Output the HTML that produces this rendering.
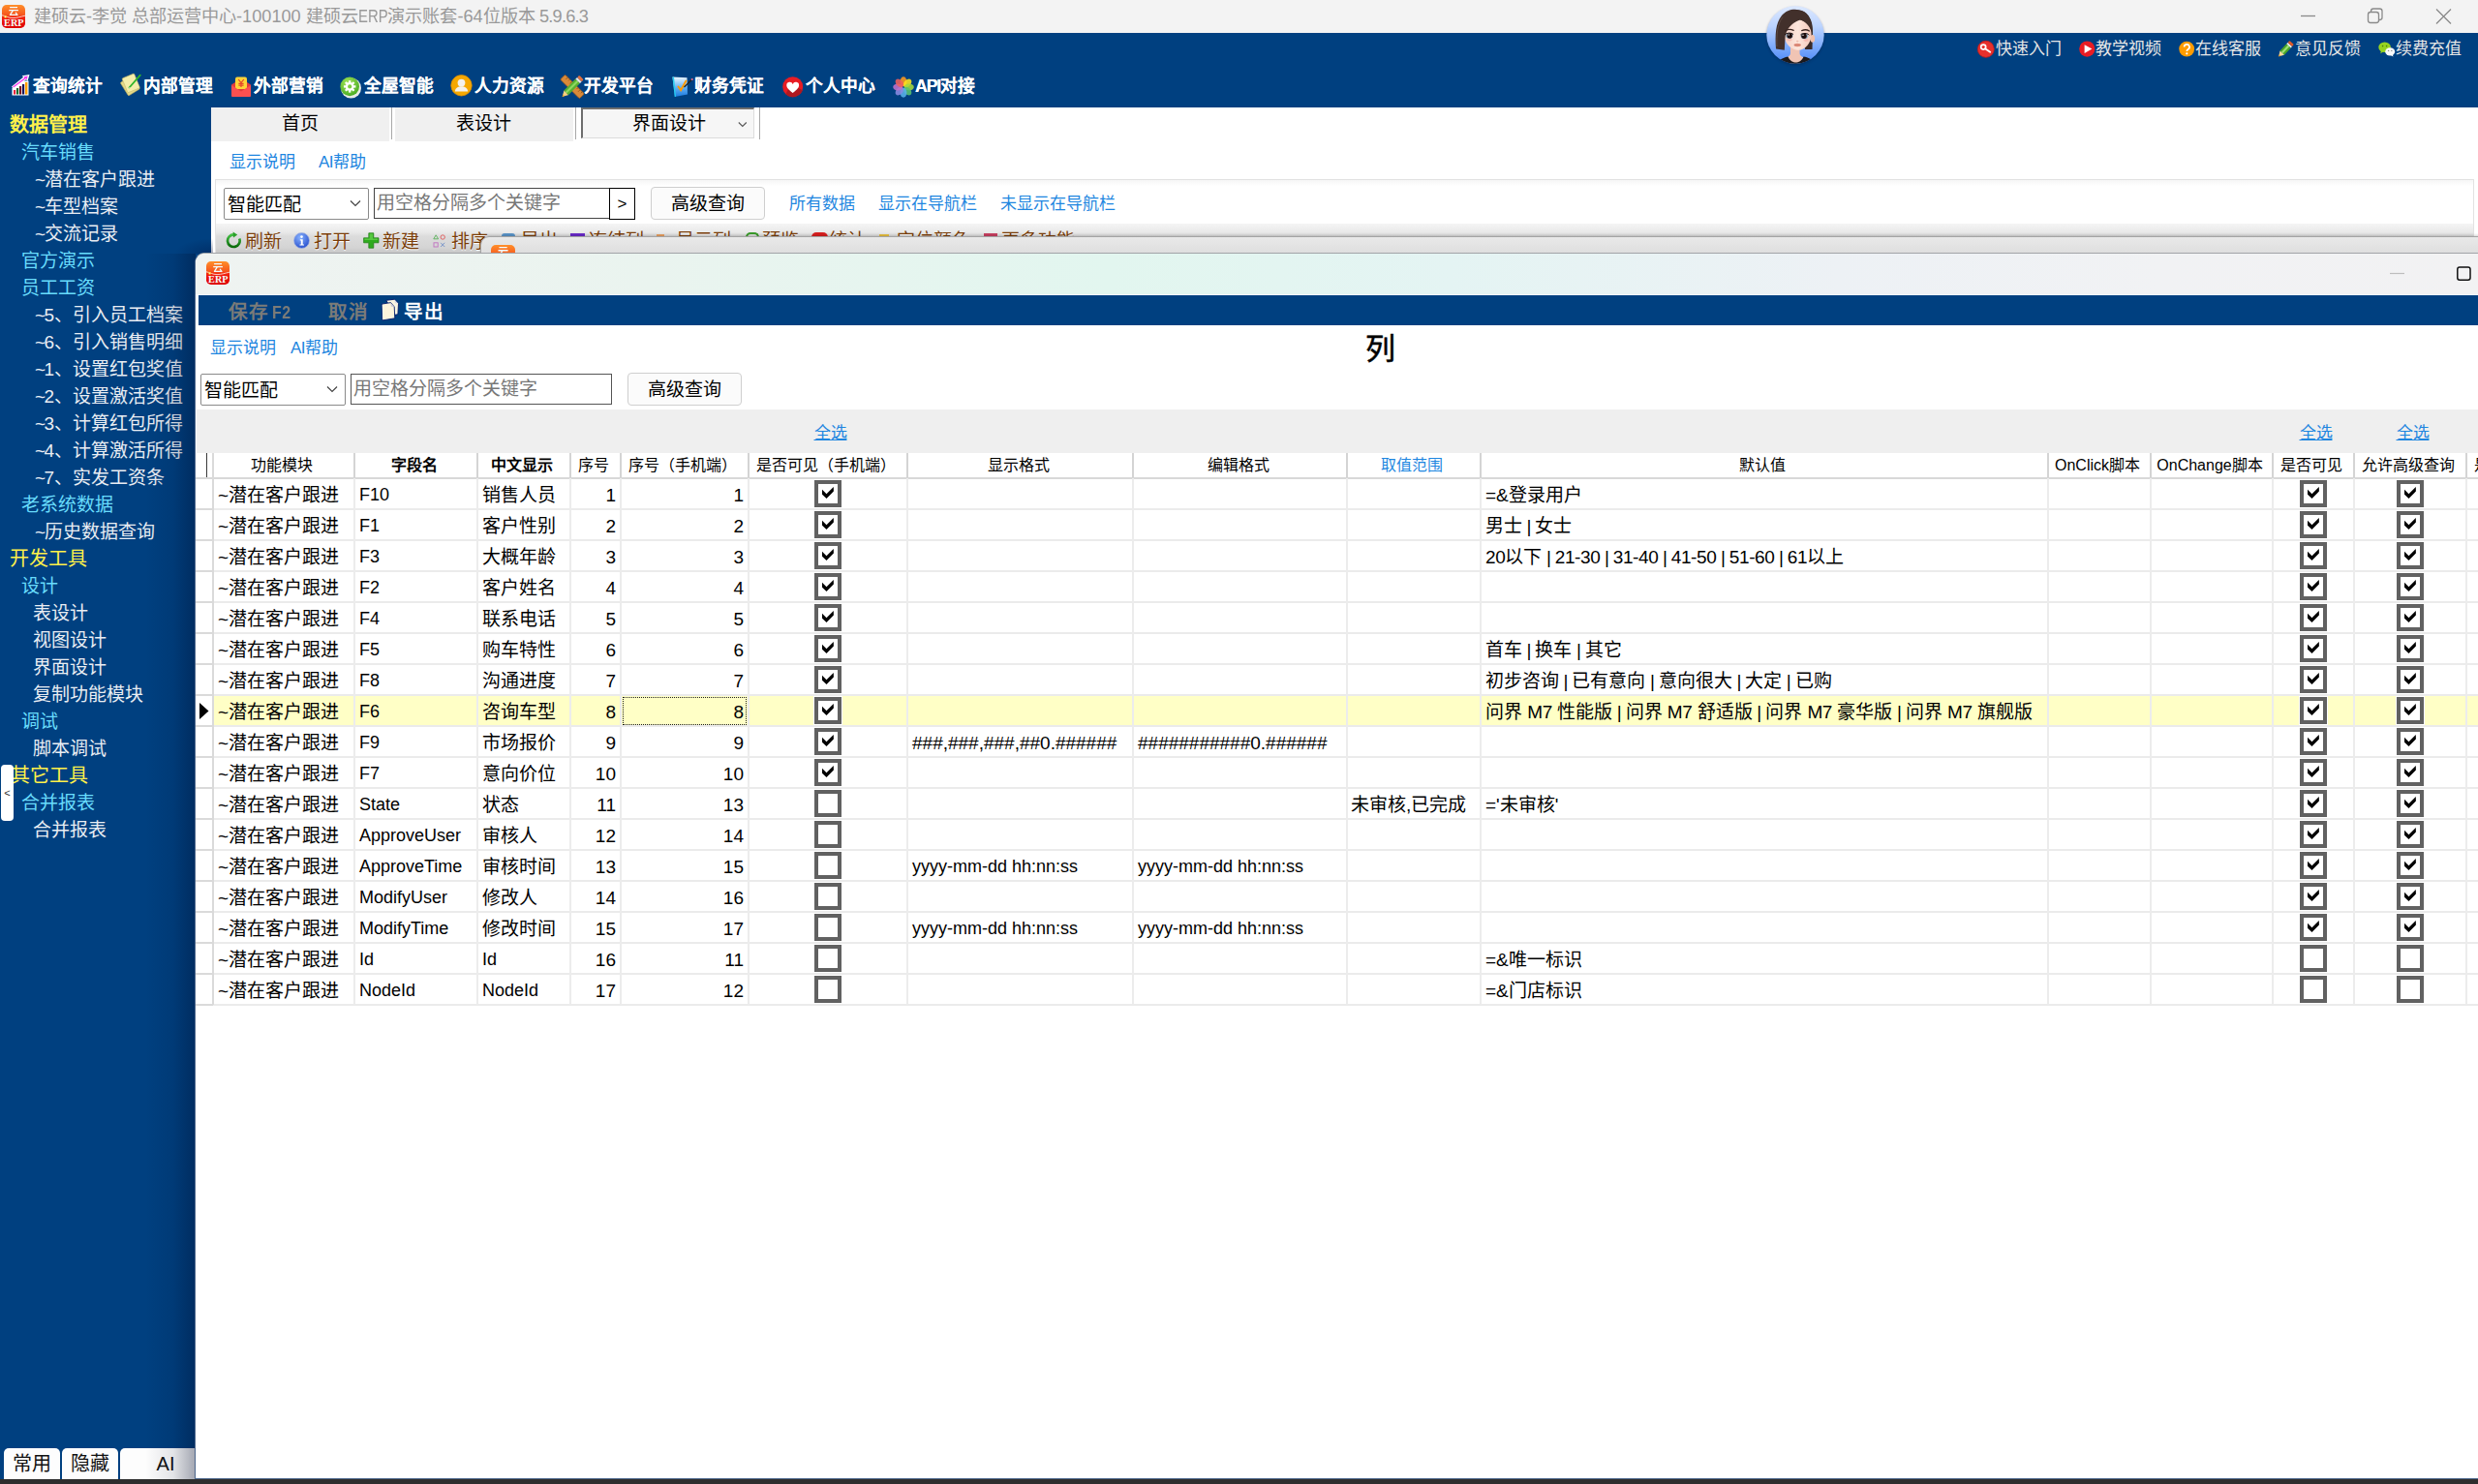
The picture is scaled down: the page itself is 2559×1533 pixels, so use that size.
<!DOCTYPE html>
<html lang="zh-CN"><head><meta charset="utf-8"><title>ERP</title>
<style>
*{box-sizing:border-box;margin:0;padding:0}
html,body{width:2559px;height:1533px;overflow:hidden;background:#fff}
body{font-family:"Liberation Sans",sans-serif;position:relative;color:#000}
.a{position:absolute;white-space:nowrap}
.t{position:absolute;white-space:nowrap;line-height:1}
svg{position:absolute;overflow:visible}
.lnk{color:#1e86e0}
.sb{position:absolute;white-space:nowrap;left:0;height:28px;line-height:28px;font-size:19px}
.y{color:#fff04a;font-size:20px}.yb{font-weight:bold}
.c{color:#68dcfc}
.w{color:#e9edf3}
.mn{position:absolute;white-space:nowrap;color:#fff;font-weight:bold;font-size:17.700px;top:76px;height:26px;line-height:26px;text-shadow:0 0 .6px #fff}
.ql{position:absolute;white-space:nowrap;color:#e6e6e6;font-size:17px;top:38px;height:26px;line-height:26px}
.tb{position:absolute;white-space:nowrap;text-shadow:0 1px 0 #fff;color:#7a3d08;font-size:19px;top:237px;height:26px;line-height:26px}
.hd{position:absolute;top:468px;height:26px;line-height:26px;font-size:16px;text-align:center;white-space:nowrap;overflow:hidden}
.cell{position:absolute;height:30px;line-height:31px;font-size:19px;white-space:nowrap;overflow:hidden}
.num{text-align:right}
.cb{position:absolute;width:28px;height:28px;border:4px solid #616161;background:#fff;box-shadow:0 0 0 1px #fff}
</style></head>
<body>
<div class="a" style="left:0;top:0;width:2559px;height:34px;background:#f3f3f3"></div>
<svg style="left:2px;top:5px" width="24" height="24" viewBox="0 0 24 24"><defs><linearGradient id="g1" x1="0" y1="0" x2="0" y2="1"><stop offset="0" stop-color="#ff8f2a"/><stop offset="0.42" stop-color="#f6581e"/><stop offset="0.52" stop-color="#f22a0e"/><stop offset="0.62" stop-color="#ee1a10"/><stop offset="1" stop-color="#de0000"/></linearGradient><radialGradient id="g1s"><stop offset="0" stop-color="#fffbe0"/><stop offset=".5" stop-color="#ffd23a" stop-opacity=".8"/><stop offset="1" stop-color="#ff9a1a" stop-opacity="0"/></radialGradient></defs><rect x="0" y="0" width="24" height="24" rx="4.800" fill="url(#g1)"/><path d="M0 10.800C4 11.400 6.500 13.600 11 13.600S19.500 12.200 24 11.200" stroke="#fff" stroke-opacity=".82" stroke-width="0.9" fill="none"/><circle cx="3.600" cy="12.300" r="2" fill="url(#g1s)"/><path d="M8.100 2.500h7.900M7.200 5.500h9.700M11.300 5.800L8.400 10.400h8M14.100 7.800l2.200 3" stroke="#f2fcff" stroke-width="1.250" fill="none" stroke-linejoin="round"/><text x="12.300" y="22" text-anchor="middle" font-family="Liberation Serif,serif" font-weight="bold" font-size="10.200" fill="#f4fcfc">ERP</text></svg>
<div class="t" style="left:35px;top:4px;height:26px;line-height:26px;font-size:18.150px;color:#999">建硕云-李觉 总部运营中心-100100 建硕云<span style="display:inline-block;transform:scaleX(.82);transform-origin:0 50%;margin-right:-6.600px">ERP</span>演示账套-64位版本<span style="letter-spacing:-.75px"> 5.9.6.3</span></div>
<svg style="left:2370px;top:4px" width="170" height="26" viewBox="0 0 170 26"><g stroke="#8a8a8a" stroke-width="1.3" fill="none"><path d="M6 12.5h15"/><rect x="75.5" y="8.5" width="11" height="11" rx="2.5"/><path d="M78.5 8.5v-1a2.5 2.5 0 0 1 2.5-2.5h6.5a2.5 2.5 0 0 1 2.500 2.5v6.5a2.5 2.5 0 0 1-2.5 2.5h-1"/><path d="M146 5.500l15 15M161 5.500l-15 15"/></g></svg>
<div class="a" style="left:0;top:34px;width:2559px;height:77px;background:#004080"></div>
<svg style="left:11px;top:76px" width="20" height="23" viewBox="0 0 20 23"><path d="M1.500 22.500V15L9 7.500 18.500 7.500V22.500Z" fill="#fff"/><rect x="3" y="17" width="2.200" height="4.500" fill="#e8243c"/><rect x="6" y="15" width="2.200" height="6.500" fill="#146a2c"/><rect x="9" y="13" width="2.200" height="8.500" fill="#7a1420"/><rect x="12" y="11" width="2.200" height="10.500" fill="#181858"/><rect x="15" y="9" width="2.400" height="12.500" fill="#ffa000"/><path d="M1 13.500L13 3.800 11.800 2.200 19.500 1 17.500 8 16 6.200 2.800 15.500Z" fill="#fff"/><path d="M2.200 13.600L14.200 4.400 13.500 3.200 17.800 2.400 16.600 6.200 15.600 5.200 3 14.600Z" fill="#f43cf0"/></svg>
<svg style="left:122px;top:75px" width="25" height="24" viewBox="0 0 25 24"><g transform="rotate(-32 12 12)"><rect x="4.500" y="5.500" width="14" height="16" rx="1" fill="#e4d98a" stroke="#b8ac5a" stroke-width=".6"/></g><g transform="rotate(-22 13 11)"><rect x="6.500" y="3" width="13.500" height="16" rx="1" fill="#f4eeaa" stroke="#c9bd6a" stroke-width=".6"/></g><path d="M11.500 15.500L22.800 2.600" stroke="#2fb52a" stroke-width="1.800" stroke-linecap="round"/><path d="M11.200 16l1.200-.4" stroke="#fff" stroke-width="1"/></svg>
<svg style="left:238px;top:78px" width="22" height="23" viewBox="0 0 22 23"><path d="M1 9.500L11 3 21 9.500V20.500a1.500 1.500 0 0 1-1.500 1.500H2.500A1.500 1.500 0 0 1 1 20.500Z" fill="#e23b3b"/><rect x="5" y="1.500" width="12" height="12.500" rx="2" fill="#ffd438"/><path d="M1 10L11 16.500 21 10V20.500a1.500 1.500 0 0 1-1.500 1.500H2.500A1.500 1.500 0 0 1 1 20.500Z" fill="#fb5050"/><path d="M8.200 4l2.800 3.600L13.800 4M11 7.600V12M8.400 8.400h5.200M8.400 10.200h5.200" stroke="#e8452a" stroke-width="1.200" fill="none"/></svg>
<svg style="left:350px;top:78px" width="24" height="24" viewBox="0 0 24 24"><defs><radialGradient id="gg" cx=".4" cy=".3" r=".8"><stop offset="0" stop-color="#a4e65a"/><stop offset="1" stop-color="#3fa51c"/></radialGradient></defs><circle cx="12.500" cy="13" r="10.500" fill="#e9ece6"/><circle cx="11.200" cy="11.400" r="9.800" fill="url(#gg)"/><g transform="translate(11.200 11.400)" fill="#fff"><circle r="4.300"/><rect x="-1.150" y="-6.200" width="2.300" height="3" transform="rotate(0)"/><rect x="-1.150" y="-6.200" width="2.300" height="3" transform="rotate(45)"/><rect x="-1.150" y="-6.200" width="2.300" height="3" transform="rotate(90)"/><rect x="-1.150" y="-6.200" width="2.300" height="3" transform="rotate(135)"/><rect x="-1.150" y="-6.200" width="2.300" height="3" transform="rotate(180)"/><rect x="-1.150" y="-6.200" width="2.300" height="3" transform="rotate(225)"/><rect x="-1.150" y="-6.200" width="2.300" height="3" transform="rotate(270)"/><rect x="-1.150" y="-6.200" width="2.300" height="3" transform="rotate(315)"/><circle r="2.100" fill="#7ccc3c"/></g></svg>
<svg style="left:465px;top:77px" width="23" height="23" viewBox="0 0 23 23"><circle cx="11.500" cy="11.300" r="10.700" fill="#f6a800"/><circle cx="11.500" cy="11.300" r="10.700" fill="none" stroke="#e09000" stroke-width=".8"/><circle cx="11.500" cy="8.600" r="3.900" fill="#f4f1ec"/><path d="M4.800 17.600c.4-4 3.200-5.400 6.700-5.400s6.300 1.400 6.700 5.400z" fill="#f4f1ec"/></svg>
<svg style="left:579px;top:77px" width="24" height="25" viewBox="0 0 24 25"><g transform="rotate(45 12 12.500)"><rect x="-2" y="9" width="28" height="7" rx="1.200" fill="#d98a3a" stroke="#a85c14" stroke-width=".7"/><path d="M2 9v3M5 9v2M8 9v3M11 9v2M14 9v3M17 9v2M20 9v3M23 9v2" stroke="#8a4a10" stroke-width=".7"/></g><g transform="rotate(-45 12 12.500)"><rect x="3" y="9.300" width="17" height="6.400" fill="#58b030"/><rect x="3" y="11.300" width="17" height="2.200" fill="#8ed860"/><rect x="20" y="9.300" width="2.400" height="6.400" fill="#e8e8e8"/><rect x="22.400" y="9.300" width="3" height="6.400" rx="1.200" fill="#e07040"/><path d="M3 9.300L-2.500 12.500 3 15.700Z" fill="#f8d080"/><path d="M-.500 11.300L-2.800 12.500-.500 13.700Z" fill="#e8a020"/></g></svg>
<svg style="left:693px;top:78px" width="24" height="24" viewBox="0 0 24 24"><defs><linearGradient id="bd" x1="0" y1="0" x2="0" y2="1"><stop offset="0" stop-color="#eef8ff"/><stop offset=".5" stop-color="#6ab4f4"/><stop offset="1" stop-color="#1a7ae0"/></linearGradient></defs><path d="M1.500 1.500L16.500 2.200 17 19.500 3.800 22Z" fill="url(#bd)"/><path d="M1.500 1.500L3.800 22 5 21.700 3 1.600Z" fill="#22d0f0"/><path d="M7.500 11.500l2.600 3.600L15.500 5.500" stroke="#ff9a00" stroke-width="2" fill="none" stroke-linecap="round"/><path d="M13.500 12L21.500 4.300" stroke="#222" stroke-width="1.300"/><circle cx="21.700" cy="4" r="1.100" fill="#f06a8a"/></svg>
<svg style="left:808px;top:79px" width="22" height="22" viewBox="0 0 22 22"><circle cx="10.700" cy="10.700" r="10.500" fill="#e81c24"/><path d="M3.400 18.200L8 9l8.500 3 4.300 2.200A10.500 10.500 0 0 1 3.400 18.200Z" fill="#b01820"/><path d="M10.700 17C6 13.600 4.300 11.500 4.300 9.100a3.300 3.300 0 0 1 6.400-1.200 3.300 3.300 0 0 1 6.400 1.200c0 2.400-1.700 4.500-6.400 7.900z" fill="#fff"/></svg>
<svg style="left:922px;top:79px" width="22" height="22" viewBox="0 0 22 22"><ellipse cx="11" cy="5.200" rx="3.400" ry="5" fill="#ff9a1c" fill-opacity=".88" transform="rotate(0 11 11)"/><ellipse cx="11" cy="5.200" rx="3.400" ry="5" fill="#ffe21c" fill-opacity=".88" transform="rotate(45 11 11)"/><ellipse cx="11" cy="5.200" rx="3.400" ry="5" fill="#a4d83c" fill-opacity=".88" transform="rotate(90 11 11)"/><ellipse cx="11" cy="5.200" rx="3.400" ry="5" fill="#58c070" fill-opacity=".88" transform="rotate(135 11 11)"/><ellipse cx="11" cy="5.200" rx="3.400" ry="5" fill="#58b0e8" fill-opacity=".88" transform="rotate(180 11 11)"/><ellipse cx="11" cy="5.200" rx="3.400" ry="5" fill="#8a8ae0" fill-opacity=".88" transform="rotate(225 11 11)"/><ellipse cx="11" cy="5.200" rx="3.400" ry="5" fill="#c070c8" fill-opacity=".88" transform="rotate(270 11 11)"/><ellipse cx="11" cy="5.200" rx="3.400" ry="5" fill="#f0605c" fill-opacity=".88" transform="rotate(315 11 11)"/></svg>
<div class="mn" style="left:34px">查询统计</div><div class="mn" style="left:148px">内部管理</div><div class="mn" style="left:262px">外部营销</div><div class="mn" style="left:376px">全屋智能</div><div class="mn" style="left:490px">人力资源</div><div class="mn" style="left:603px">开发平台</div><div class="mn" style="left:717px">财务凭证</div><div class="mn" style="left:832px">个人中心</div><div class="mn" style="left:945px"><span style="letter-spacing:-1.100px">API</span>对接</div>
<svg style="left:1824px;top:6px" width="60" height="60" viewBox="0 0 60 60"><defs><linearGradient id="avb" x1="0" y1="0" x2="0" y2="1"><stop offset="0" stop-color="#dce8ff"/><stop offset=".35" stop-color="#bcd4ff"/><stop offset="1" stop-color="#4a88f8"/></linearGradient><linearGradient id="avs" x1="0" y1="0" x2="1" y2="0"><stop offset="0" stop-color="#f4cfc4"/><stop offset=".5" stop-color="#fde6dc"/><stop offset="1" stop-color="#f2c8ba"/></linearGradient><clipPath id="avc"><circle cx="30" cy="30" r="29.700"/></clipPath><filter id="avf" x="-20%" y="-20%" width="140%" height="140%"><feGaussianBlur stdDeviation="1.600"/></filter></defs><circle cx="30" cy="31.500" r="29.500" fill="#001c40" opacity=".45" filter="url(#avf)"/><circle cx="30" cy="30" r="29.700" fill="url(#avb)"/><g clip-path="url(#avc)"><path d="M30 4.500C41 3.500 48 12 48 26 L47.500 45 L40 45 L38 20Z" fill="#3a2a26"/><path d="M25 40h9.500v9c0 2 2 3.600 4.500 4.600l-4 6h-11l-4-6c3-1 5-2.600 5-4.600z" fill="#f0c4b4"/><path d="M10 60C13 55 19 53.500 22.500 52.600 24 57 28 58.600 30.500 58.600S37 57 38.500 52.600C43 53.500 48 55 51 60Z" fill="#1c1a1c"/><ellipse cx="47.800" cy="33.800" rx="2.400" ry="3.900" fill="#f0c0ac"/><path d="M18.600 30C18.600 20 24 14.500 32.500 14.500S46.600 20 46.600 30C46.600 38 40 45.800 33 45.800S18.600 39 18.600 30Z" fill="url(#avs)"/><ellipse cx="24" cy="35" rx="2.600" ry="1.400" fill="#f4a8a0" opacity=".55"/><ellipse cx="41" cy="35.500" rx="2.600" ry="1.400" fill="#f4a8a0" opacity=".55"/><path d="M35.500 14.600C29 16.500 21.500 21.500 19.600 31.500 L18.800 45.800 L10 44.600 C9 30 9.500 18 16 10 C21 4 28 2.800 34 4.200 C42 5 47.500 13 47.800 30 C46.500 24 42.500 17.600 35.500 14.600Z" fill="#42302b"/><path d="M11 42C10.500 30 11.500 19 17 11.500" stroke="#6a5750" stroke-width="1" fill="none" opacity=".6"/><path d="M19.700 25.600C22 24.200 25.500 24 28.200 25.300" stroke="#3a2622" stroke-width="1.300" fill="none" stroke-linecap="round"/><path d="M36.700 25.600C39.500 24.400 42.500 24.700 44.400 26" stroke="#3a2622" stroke-width="1.300" fill="none" stroke-linecap="round"/><ellipse cx="23.800" cy="30.800" rx="3.900" ry="3.100" fill="#9fb2c4"/><ellipse cx="39.400" cy="31.200" rx="3.900" ry="3.100" fill="#9fb2c4"/><circle cx="24.200" cy="30.900" r="2.750" fill="#1c0c0c"/><circle cx="39" cy="31.300" r="2.750" fill="#1c0c0c"/><circle cx="23.200" cy="29.900" r=".7" fill="#fff"/><circle cx="38" cy="30.300" r=".7" fill="#fff"/><path d="M19.200 29.800C21 27.800 26 27.500 28 29.600" stroke="#1a0c0c" stroke-width="1" fill="none"/><path d="M35.500 29.900C37.500 27.900 42.500 28 44.300 30.200" stroke="#1a0c0c" stroke-width="1" fill="none"/><ellipse cx="32.200" cy="36.600" rx="1.300" ry=".8" fill="#e8b0a0" opacity=".8"/><ellipse cx="32.200" cy="40.500" rx="3.600" ry="1.700" fill="#e08e7c"/><path d="M28.800 40.400Q32.200 41.400 35.600 40.400" stroke="#c87464" stroke-width=".5" fill="none"/></g></svg>
<svg style="left:2042px;top:42px" width="18" height="18" viewBox="0 0 18 18"><circle cx="8.800" cy="8.800" r="8.500" fill="#e8302c"/><circle cx="8.800" cy="8.800" r="8.500" fill="none" stroke="#c41c1c" stroke-width=".8"/><circle cx="6.200" cy="6.600" r="2.500" fill="none" stroke="#fff" stroke-width="1.600"/><path d="M8 8.200l5.200 3.600" stroke="#fff" stroke-width="1.900" stroke-linecap="round"/></svg>
<svg style="left:2147px;top:42px" width="17" height="17" viewBox="0 0 17 17"><circle cx="8.300" cy="8.600" r="8.100" fill="#e81c24"/><path d="M5.600 4.200v8.800l7.800-4.400z" fill="#fff"/></svg>
<svg style="left:2250px;top:42px" width="17" height="17" viewBox="0 0 17 17"><circle cx="8.200" cy="8.600" r="7.900" fill="#ff9c00"/><path d="M5.600 6.600a2.700 2.700 0 1 1 3.900 2.400c-.9.500-1.200 1-1.200 2" stroke="#fff" stroke-width="1.700" fill="none"/><circle cx="8.300" cy="13.300" r="1.100" fill="#fff"/></svg>
<svg style="left:2352px;top:40px" width="19" height="19" viewBox="0 0 19 19"><g transform="rotate(-47 9.500 9.500)"><rect x="2.500" y="6.400" width="10" height="6.200" fill="#4ca428"/><rect x="2.500" y="8.400" width="10" height="2.200" fill="#9ce070"/><rect x="12.500" y="6.400" width="1.800" height="6.200" fill="#ececec"/><rect x="14.300" y="6.400" width="2.800" height="6.200" rx="1.200" fill="#e05a28"/><path d="M2.500 6.400L-2.600 9.500 2.500 12.600Z" fill="#f8dc98"/><path d="M-.800 8.400L-2.800 9.500-.800 10.600Z" fill="#e89820"/></g></svg>
<svg style="left:2456px;top:42px" width="18" height="18" viewBox="0 0 18 18"><ellipse cx="6.600" cy="6.800" rx="6.300" ry="5.300" fill="#96d420"/><path d="M3 10.500l-.8 2.700 3-1.600z" fill="#96d420"/><circle cx="4.600" cy="5.600" r=".8" fill="#4a7a08"/><circle cx="8.600" cy="5.600" r=".8" fill="#4a7a08"/><ellipse cx="12.200" cy="11.400" rx="5" ry="4.200" fill="#fafafa"/><path d="M14.500 14.500l1.200 2-2.600-1z" fill="#fafafa"/><circle cx="10.600" cy="10.400" r=".7" fill="#888"/><circle cx="13.800" cy="10.400" r=".7" fill="#888"/></svg>
<div class="ql" style="left:2061px">快速入门</div><div class="ql" style="left:2164px">教学视频</div><div class="ql" style="left:2267px">在线客服</div><div class="ql" style="left:2370px">意见反馈</div><div class="ql" style="left:2474px">续费充值</div>
<div class="a" style="left:0;top:111px;width:218px;height:1417px;background:#004080"></div>
<div class="sb y yb" style="left:10px;top:115px">数据管理</div><div class="sb c" style="left:22px;top:144px">汽车销售</div><div class="sb w" style="left:36px;top:172px"><span style="letter-spacing:-1.600px">~</span>潜在客户跟进</div><div class="sb w" style="left:36px;top:200px"><span style="letter-spacing:-1.600px">~</span>车型档案</div><div class="sb w" style="left:36px;top:228px"><span style="letter-spacing:-1.600px">~</span>交流记录</div><div class="sb c" style="left:22px;top:256px">官方演示</div><div class="sb c" style="left:22px;top:284px">员工工资</div><div class="sb w" style="left:36px;top:312px"><span style="letter-spacing:-1.600px">~</span>5、引入员工档案</div><div class="sb w" style="left:36px;top:340px"><span style="letter-spacing:-1.600px">~</span>6、引入销售明细</div><div class="sb w" style="left:36px;top:368px"><span style="letter-spacing:-1.600px">~</span>1、设置红包奖值</div><div class="sb w" style="left:36px;top:396px"><span style="letter-spacing:-1.600px">~</span>2、设置激活奖值</div><div class="sb w" style="left:36px;top:424px"><span style="letter-spacing:-1.600px">~</span>3、计算红包所得</div><div class="sb w" style="left:36px;top:452px"><span style="letter-spacing:-1.600px">~</span>4、计算激活所得</div><div class="sb w" style="left:36px;top:480px"><span style="letter-spacing:-1.600px">~</span>7、实发工资条</div><div class="sb c" style="left:22px;top:508px">老系统数据</div><div class="sb w" style="left:36px;top:536px"><span style="letter-spacing:-1.600px">~</span>历史数据查询</div><div class="sb y" style="left:10px;top:563px">开发工具</div><div class="sb c" style="left:22px;top:592px">设计</div><div class="sb w" style="left:34px;top:620px">表设计</div><div class="sb w" style="left:34px;top:648px">视图设计</div><div class="sb w" style="left:34px;top:676px">界面设计</div><div class="sb w" style="left:34px;top:704px">复制功能模块</div><div class="sb c" style="left:22px;top:732px">调试</div><div class="sb w" style="left:34px;top:760px">脚本调试</div><div class="sb y" style="left:11px;top:787px">其它工具</div><div class="sb c" style="left:22px;top:816px">合并报表</div><div class="sb w" style="left:34px;top:844px">合并报表</div>
<div class="a" style="left:1px;top:790px;width:13px;height:58px;background:#fff;border-radius:4px;font-size:11px;line-height:58px;text-align:center;color:#333">&lt;</div>
<div class="a" style="left:4px;top:1496px;width:58px;height:32px;background:#fdfdfd;border-radius:5px 5px 0 0;font-size:20px;line-height:32px;text-align:center;color:#111">常用</div><div class="a" style="left:64px;top:1496px;width:58px;height:32px;background:#fdfdfd;border-radius:5px 5px 0 0;font-size:20px;line-height:32px;text-align:center;color:#111">隐藏</div><div class="a" style="left:124px;top:1496px;width:94px;height:32px;background:#fdfdfd;border-radius:5px 5px 0 0;font-size:20px;line-height:32px;text-align:center;color:#111">AI</div>
<div class="a" style="left:218px;top:111px;width:184px;height:35px;background:#f0f0f0"></div><div class="a" style="left:404px;top:111px;width:1px;height:33px;background:#a8a8a8"></div><div class="a" style="left:408px;top:111px;width:184px;height:35px;background:#f0f0f0"></div><div class="a" style="left:594px;top:111px;width:1px;height:33px;background:#a8a8a8"></div><div class="a" style="left:600px;top:111px;width:179px;height:32px;background:#f6f6f6;border-top:2px solid #6e6e6e;border-left:2px solid #6e6e6e;border-right:1px solid #dcdcdc;border-bottom:1px solid #dcdcdc"></div><div class="a" style="left:784px;top:111px;width:1px;height:33px;background:#a8a8a8"></div>
<div class="t" style="left:250px;width:120px;text-align:center;top:114px;height:28px;line-height:28px;font-size:19px">首页</div><div class="t" style="left:439px;width:120px;text-align:center;top:114px;height:28px;line-height:28px;font-size:19px">表设计</div><div class="t" style="left:631px;width:120px;text-align:center;top:114px;height:28px;line-height:28px;font-size:19px">界面设计</div><svg style="left:762px;top:125px" width="10" height="8" viewBox="0 0 10 8"><path d="M.8 1.500l4 4 4-4" stroke="#555" stroke-width="1.100" fill="none"/></svg>
<div class="t lnk" style="left:237px;top:155px;height:26px;line-height:26px;font-size:17px">显示说明</div><div class="t lnk" style="left:329px;top:155px;height:26px;line-height:26px;font-size:17px"><span style="letter-spacing:-.5px">AI</span>帮助</div>
<div class="a" style="left:222px;top:185px;width:2333px;height:80px;border:1px solid #e2e2e2;border-bottom:none;background:#fff"></div><div class="a" style="left:223px;top:186px;width:2331px;height:6px;background:linear-gradient(#f6f6f6,#fff)"></div><div class="a" style="left:223px;top:231px;width:2331px;height:31px;background:linear-gradient(#f5f5f5,#e9e9e9 28%,#dcdcdc 42%,#d4d4d4 80%,#c6c6c6)"></div>
<div class="a" style="left:231px;top:194px;width:150px;height:33px;border:1px solid #8a8a8a;border-radius:2px;background:#fff;font-size:19px;line-height:34px;padding-left:3px">智能匹配</div><svg style="left:361px;top:206px" width="12" height="9" viewBox="0 0 12 9"><path d="M1 1.500l5 5 5-5" stroke="#444" stroke-width="1.200" fill="none"/></svg><div class="a" style="left:386px;top:194px;width:244px;height:32px;border:1px solid #444;border-right:none;background:#fff;font-size:19px;line-height:30px;padding-left:2px;color:#777">用空格分隔多个关键字</div><div class="a" style="left:629px;top:194px;width:27px;height:33px;border:1.500px solid #000;background:#fff;font-size:17px;line-height:31px;text-align:center">&gt;</div><div class="a" style="left:672px;top:193px;width:118px;height:34px;border:1px solid #cfcfcf;border-radius:4px;background:#fbfbfb;font-size:19px;line-height:33px;text-align:center">高级查询</div>
<div class="t lnk" style="left:815px;top:198px;height:26px;line-height:26px;font-size:17px">所有数据</div><div class="t lnk" style="left:907px;top:198px;height:26px;line-height:26px;font-size:17px">显示在导航栏</div><div class="t lnk" style="left:1033px;top:198px;height:26px;line-height:26px;font-size:17px">未显示在导航栏</div>
<svg style="left:232px;top:239px" width="18" height="19" viewBox="0 0 18 19"><defs><linearGradient id="rf" x1="0" y1="0" x2="0" y2="1"><stop offset="0" stop-color="#44c044"/><stop offset="1" stop-color="#0a6a0a"/></linearGradient></defs><path d="M9.600 3.400A6.300 6.300 0 1 0 15.200 7.400" stroke="url(#rf)" stroke-width="2.700" fill="none"/><path d="M8.600 .4L13.200 3.400 9 6.400Z" fill="#2aa02a"/></svg><div class="tb" style="left:253px">刷新</div><svg style="left:303px;top:240px" width="17" height="17" viewBox="0 0 17 17"><defs><radialGradient id="ib" cx=".4" cy=".3" r=".8"><stop offset="0" stop-color="#8ab4ff"/><stop offset="1" stop-color="#1c44c8"/></radialGradient></defs><circle cx="8.500" cy="8.500" r="8" fill="url(#ib)" stroke="#a8b8e0" stroke-width=".8"/><circle cx="8.500" cy="4.600" r="1.300" fill="#fff"/><path d="M6.800 7.200h2.900v5.200h1.300v1.200H6.500v-1.200h1.300V8.400H6.800z" fill="#fff"/></svg><div class="tb" style="left:324px">打开</div><svg style="left:375px;top:240px" width="17" height="17" viewBox="0 0 17 17"><path d="M5.800 .8h5v5h5.200v5h-5.200v5.400h-5v-5.400H.6v-5h5.200z" fill="#2eaa1e" stroke="#1c7a12" stroke-width=".7"/><path d="M6.600 1.600h3.400v5H15v1.500H1.400V6.600h5.200z" fill="#6ad44e" opacity=".7"/></svg><div class="tb" style="left:395px">新建</div><svg style="left:447px;top:242px" width="14" height="15" viewBox="0 0 14 15"><path d="M3.200 .8L5.600 4.800H.8z" stroke="#58b058" fill="none" stroke-width=".9"/><circle cx="10.200" cy="3" r="2.200" stroke="#e05858" fill="none" stroke-width=".9"/><rect x="1" y="8.800" width="4.200" height="4.200" stroke="#c070c0" fill="none" stroke-width=".9"/><path d="M8.200 8.800l4 4.200M12.200 8.800l-4 4.200" stroke="#7090c8" stroke-width=".9"/></svg><div class="tb" style="left:466px">排序</div><div class="a" style="left:496px;top:236px;width:700px;height:8px;overflow:hidden"><div class="tb" style="left:42px;top:0">导出</div><div class="tb" style="left:112px;top:0">冻结列</div><div class="tb" style="left:202px;top:0">显示列</div><div class="tb" style="left:291px;top:0">预览</div><div class="tb" style="left:360px;top:0">统计</div><div class="tb" style="left:430px;top:0">定位颜色</div><div class="tb" style="left:538px;top:0">更多功能</div><div class="a" style="left:22px;top:5px;width:14px;height:4px;background:#5a94c8;border-radius:3px 3px 0 0"></div><div class="a" style="left:93px;top:5px;width:15px;height:4px;background:#6a2ac8"></div><div class="a" style="left:182px;top:6px;width:8px;height:3px;background:#e8a060"></div><div class="a" style="left:274px;top:4px;width:14px;height:5px;border:2px solid #3a9a2a;border-bottom:none;border-radius:7px 7px 0 0"></div><div class="a" style="left:342px;top:4px;width:17px;height:5px;background:#d82020;border-radius:5px 5px 0 0"></div><div class="a" style="left:412px;top:6px;width:10px;height:3px;background:#e8c040"></div><div class="a" style="left:520px;top:5px;width:14px;height:4px;background:#c84060"></div></div>
<div class="a" style="left:496px;top:244px;width:2100px;height:30px;background:linear-gradient(#e9e9e9,#dedede 60%,#d6d6d6);border:1px solid #a4a4a4;border-radius:9px 0 0 0;box-shadow:0 -1px 3px rgba(0,0,0,.18)"></div><div class="a" style="left:507px;top:253px;width:25px;height:9px;overflow:hidden"><svg style="left:0px;top:0px" width="25" height="25" viewBox="0 0 24 24"><defs><linearGradient id="g2" x1="0" y1="0" x2="0" y2="1"><stop offset="0" stop-color="#ff8f2a"/><stop offset="0.42" stop-color="#f6581e"/><stop offset="0.52" stop-color="#f22a0e"/><stop offset="0.62" stop-color="#ee1a10"/><stop offset="1" stop-color="#de0000"/></linearGradient><radialGradient id="g2s"><stop offset="0" stop-color="#fffbe0"/><stop offset=".5" stop-color="#ffd23a" stop-opacity=".8"/><stop offset="1" stop-color="#ff9a1a" stop-opacity="0"/></radialGradient></defs><rect x="0" y="0" width="24" height="24" rx="4.800" fill="url(#g2)"/><path d="M0 10.800C4 11.400 6.500 13.600 11 13.600S19.500 12.200 24 11.200" stroke="#fff" stroke-opacity=".82" stroke-width="0.9" fill="none"/><circle cx="3.600" cy="12.300" r="2" fill="url(#g2s)"/><path d="M8.100 2.500h7.900M7.200 5.500h9.700M11.300 5.800L8.400 10.400h8M14.100 7.800l2.200 3" stroke="#f2fcff" stroke-width="1.250" fill="none" stroke-linejoin="round"/><text x="12.300" y="22" text-anchor="middle" font-family="Liberation Serif,serif" font-weight="bold" font-size="10.200" fill="#f4fcfc">ERP</text></svg></div>
<div class="a" style="left:150px;top:262px;width:52px;height:1266px;background:linear-gradient(to right,rgba(0,10,40,0),rgba(0,10,40,.1) 55%,rgba(0,10,40,.36))"></div><div class="a" style="left:180px;top:246px;width:40px;height:16px;background:radial-gradient(ellipse at 100% 100%,rgba(0,16,60,.35),rgba(0,16,60,0) 70%)"></div>
<div class="a" style="left:201px;top:261px;width:2500px;height:1267px;background:#fff;border:1px solid #4d678c;border-top-color:#a2a4a8;border-radius:10px 0 0 0"></div><div class="a" style="left:202px;top:262px;width:2357px;height:42px;border-radius:9px 0 0 0;background:linear-gradient(to right,#eff3f1 0%,#eaf4ef 20%,#e2f6ef 40%,#e4f4f3 55%,#edf1f5 72%,#f1f2f4 86%,#f2f2f3 100%)"></div><svg style="left:213px;top:270px" width="24" height="24" viewBox="0 0 24 24"><defs><linearGradient id="g3" x1="0" y1="0" x2="0" y2="1"><stop offset="0" stop-color="#ff8f2a"/><stop offset="0.42" stop-color="#f6581e"/><stop offset="0.52" stop-color="#f22a0e"/><stop offset="0.62" stop-color="#ee1a10"/><stop offset="1" stop-color="#de0000"/></linearGradient><radialGradient id="g3s"><stop offset="0" stop-color="#fffbe0"/><stop offset=".5" stop-color="#ffd23a" stop-opacity=".8"/><stop offset="1" stop-color="#ff9a1a" stop-opacity="0"/></radialGradient></defs><rect x="0" y="0" width="24" height="24" rx="4.800" fill="url(#g3)"/><path d="M0 10.800C4 11.400 6.500 13.600 11 13.600S19.500 12.200 24 11.200" stroke="#fff" stroke-opacity=".82" stroke-width="0.9" fill="none"/><circle cx="3.600" cy="12.300" r="2" fill="url(#g3s)"/><path d="M8.100 2.500h7.900M7.200 5.500h9.700M11.300 5.800L8.400 10.400h8M14.100 7.800l2.200 3" stroke="#f2fcff" stroke-width="1.250" fill="none" stroke-linejoin="round"/><text x="12.300" y="22" text-anchor="middle" font-family="Liberation Serif,serif" font-weight="bold" font-size="10.200" fill="#f4fcfc">ERP</text></svg><svg style="left:2466px;top:275px" width="90" height="16" viewBox="0 0 90 16"><path d="M2 7.500h15" stroke="#bdbdbd" stroke-width="1.200"/><rect x="71.800" y="1" width="13.200" height="13.200" rx="2.200" fill="none" stroke="#111" stroke-width="1.500"/></svg>
<div class="a" style="left:205px;top:305px;width:2354px;height:31px;background:#004080"></div><div class="t" style="left:236px;top:309px;height:26px;line-height:26px;font-size:19.600px;letter-spacing:.6px;font-weight:bold;color:#7b7b78">保存 <span style="display:inline-block;transform:scaleX(.84);transform-origin:0 50%;font-size:19px;margin-left:-2px;margin-right:-2px">F2</span></div><div class="t" style="left:339px;top:309px;height:26px;line-height:26px;font-size:19.600px;letter-spacing:.6px;font-weight:bold;color:#7b7b78">取消</div><svg style="left:388px;top:304px" width="32" height="32" viewBox="0 0 32 32"><g stroke="#00186a" stroke-width=".9" stroke-linejoin="round"><path d="M10.800 6.300L19.400 5.200 23.500 9.500 22.900 20.700 19.800 21.300Z" fill="#fbf6e2"/><path d="M6.300 10.100L15.500 8.600 19.200 12.900 19.800 24.800 6.900 26.900Z" fill="#fdf4dc"/></g><path d="M19.400 5.500L19.900 9.200 23.200 9.600Z" fill="#dcdce6"/><path d="M15.500 8.900L15.900 12.700 19 13Z" fill="#cfcfdc"/><path d="M7.200 11L7.700 26" stroke="#fffef0" stroke-width=".8"/></svg><div class="t" style="left:417px;top:309px;height:26px;line-height:26px;font-size:19.600px;letter-spacing:.6px;font-weight:bold;color:#fff">导出</div>
<div class="t lnk" style="left:217px;top:347px;height:26px;line-height:26px;font-size:17px">显示说明</div><div class="t lnk" style="left:300px;top:347px;height:26px;line-height:26px;font-size:17px"><span style="letter-spacing:-.5px">AI</span>帮助</div><div class="t" style="left:1375px;width:100px;text-align:center;top:341px;height:40px;line-height:40px;font-size:31px;-webkit-text-stroke:.55px #000">列</div>
<div class="a" style="left:207px;top:386px;width:150px;height:33px;border:1px solid #8a8a8a;border-radius:2px;background:#fff;font-size:19px;line-height:34px;padding-left:3px">智能匹配</div><svg style="left:337px;top:398px" width="12" height="9" viewBox="0 0 12 9"><path d="M1 1.500l5 5 5-5" stroke="#444" stroke-width="1.200" fill="none"/></svg><div class="a" style="left:362px;top:386px;width:270px;height:32px;border:1px solid #555;background:#fff;font-size:19px;line-height:30px;padding-left:2px;color:#777">用空格分隔多个关键字</div><div class="a" style="left:648px;top:385px;width:118px;height:34px;border:1px solid #cfcfcf;border-radius:4px;background:#fbfbfb;font-size:19px;line-height:33px;text-align:center">高级查询</div>
<div class="a" style="left:203px;top:423px;width:2356px;height:45px;background:#efefef"></div><div class="t lnk" style="left:827.5px;width:60px;text-align:center;top:435px;height:26px;line-height:26px;font-size:17px;text-decoration:underline;text-underline-offset:1px;text-decoration-thickness:1px">全选</div><div class="t lnk" style="left:2361.5px;width:60px;text-align:center;top:435px;height:26px;line-height:26px;font-size:17px;text-decoration:underline;text-underline-offset:1px;text-decoration-thickness:1px">全选</div><div class="t lnk" style="left:2461.5px;width:60px;text-align:center;top:435px;height:26px;line-height:26px;font-size:17px;text-decoration:underline;text-underline-offset:1px;text-decoration-thickness:1px">全选</div>
<div class="a" style="left:203px;top:468px;width:2356px;height:26px;background:#fff"></div><div class="a" style="left:221px;top:719px;width:2338px;height:31px;background:#ffffc6"></div>
<div class="a" style="left:202px;top:493px;width:2357px;height:2px;background:#d8d8d8"></div><div class="a" style="left:202px;top:525px;width:2357px;height:2px;background:#ebebeb"></div><div class="a" style="left:202px;top:525px;width:18px;height:2px;background:#dadada"></div><div class="a" style="left:202px;top:557px;width:2357px;height:2px;background:#ebebeb"></div><div class="a" style="left:202px;top:557px;width:18px;height:2px;background:#dadada"></div><div class="a" style="left:202px;top:589px;width:2357px;height:2px;background:#ebebeb"></div><div class="a" style="left:202px;top:589px;width:18px;height:2px;background:#dadada"></div><div class="a" style="left:202px;top:621px;width:2357px;height:2px;background:#ebebeb"></div><div class="a" style="left:202px;top:621px;width:18px;height:2px;background:#dadada"></div><div class="a" style="left:202px;top:653px;width:2357px;height:2px;background:#ebebeb"></div><div class="a" style="left:202px;top:653px;width:18px;height:2px;background:#dadada"></div><div class="a" style="left:202px;top:685px;width:2357px;height:2px;background:#ebebeb"></div><div class="a" style="left:202px;top:685px;width:18px;height:2px;background:#dadada"></div><div class="a" style="left:202px;top:717px;width:2357px;height:2px;background:#ebebeb"></div><div class="a" style="left:202px;top:717px;width:18px;height:2px;background:#dadada"></div><div class="a" style="left:202px;top:749px;width:2357px;height:2px;background:#ebebeb"></div><div class="a" style="left:202px;top:749px;width:18px;height:2px;background:#dadada"></div><div class="a" style="left:202px;top:781px;width:2357px;height:2px;background:#ebebeb"></div><div class="a" style="left:202px;top:781px;width:18px;height:2px;background:#dadada"></div><div class="a" style="left:202px;top:813px;width:2357px;height:2px;background:#ebebeb"></div><div class="a" style="left:202px;top:813px;width:18px;height:2px;background:#dadada"></div><div class="a" style="left:202px;top:845px;width:2357px;height:2px;background:#ebebeb"></div><div class="a" style="left:202px;top:845px;width:18px;height:2px;background:#dadada"></div><div class="a" style="left:202px;top:877px;width:2357px;height:2px;background:#ebebeb"></div><div class="a" style="left:202px;top:877px;width:18px;height:2px;background:#dadada"></div><div class="a" style="left:202px;top:909px;width:2357px;height:2px;background:#ebebeb"></div><div class="a" style="left:202px;top:909px;width:18px;height:2px;background:#dadada"></div><div class="a" style="left:202px;top:941px;width:2357px;height:2px;background:#ebebeb"></div><div class="a" style="left:202px;top:941px;width:18px;height:2px;background:#dadada"></div><div class="a" style="left:202px;top:973px;width:2357px;height:2px;background:#ebebeb"></div><div class="a" style="left:202px;top:973px;width:18px;height:2px;background:#dadada"></div><div class="a" style="left:202px;top:1005px;width:2357px;height:2px;background:#ebebeb"></div><div class="a" style="left:202px;top:1005px;width:18px;height:2px;background:#dadada"></div><div class="a" style="left:202px;top:1037px;width:2357px;height:2px;background:#ebebeb"></div><div class="a" style="left:202px;top:1037px;width:18px;height:2px;background:#dadada"></div>
<div class="a" style="left:219px;top:468px;width:2px;height:26px;background:#d4d4d4"></div><div class="a" style="left:219px;top:494px;width:2px;height:544px;background:#ececec"></div><div class="a" style="left:365px;top:468px;width:2px;height:26px;background:#d4d4d4"></div><div class="a" style="left:365px;top:494px;width:2px;height:544px;background:#ececec"></div><div class="a" style="left:492px;top:468px;width:2px;height:26px;background:#d4d4d4"></div><div class="a" style="left:492px;top:494px;width:2px;height:544px;background:#ececec"></div><div class="a" style="left:588px;top:468px;width:2px;height:26px;background:#d4d4d4"></div><div class="a" style="left:588px;top:494px;width:2px;height:544px;background:#ececec"></div><div class="a" style="left:640px;top:468px;width:2px;height:26px;background:#d4d4d4"></div><div class="a" style="left:640px;top:494px;width:2px;height:544px;background:#ececec"></div><div class="a" style="left:772px;top:468px;width:2px;height:26px;background:#d4d4d4"></div><div class="a" style="left:772px;top:494px;width:2px;height:544px;background:#ececec"></div><div class="a" style="left:936px;top:468px;width:2px;height:26px;background:#d4d4d4"></div><div class="a" style="left:936px;top:494px;width:2px;height:544px;background:#ececec"></div><div class="a" style="left:1169px;top:468px;width:2px;height:26px;background:#d4d4d4"></div><div class="a" style="left:1169px;top:494px;width:2px;height:544px;background:#ececec"></div><div class="a" style="left:1390px;top:468px;width:2px;height:26px;background:#d4d4d4"></div><div class="a" style="left:1390px;top:494px;width:2px;height:544px;background:#ececec"></div><div class="a" style="left:1528px;top:468px;width:2px;height:26px;background:#d4d4d4"></div><div class="a" style="left:1528px;top:494px;width:2px;height:544px;background:#ececec"></div><div class="a" style="left:2114px;top:468px;width:2px;height:26px;background:#d4d4d4"></div><div class="a" style="left:2114px;top:494px;width:2px;height:544px;background:#ececec"></div><div class="a" style="left:2220px;top:468px;width:2px;height:26px;background:#d4d4d4"></div><div class="a" style="left:2220px;top:494px;width:2px;height:544px;background:#ececec"></div><div class="a" style="left:2346px;top:468px;width:2px;height:26px;background:#d4d4d4"></div><div class="a" style="left:2346px;top:494px;width:2px;height:544px;background:#ececec"></div><div class="a" style="left:2430px;top:468px;width:2px;height:26px;background:#d4d4d4"></div><div class="a" style="left:2430px;top:494px;width:2px;height:544px;background:#ececec"></div><div class="a" style="left:2546px;top:468px;width:2px;height:26px;background:#d4d4d4"></div><div class="a" style="left:2546px;top:494px;width:2px;height:544px;background:#ececec"></div><div class="a" style="left:219px;top:468px;width:2px;height:570px;background:#dadada"></div><div class="a" style="left:213px;top:468px;width:1px;height:25px;background:#3a3a3a"></div>
<div class="hd" style="left:219px;width:144px;">功能模块</div><div class="hd" style="left:365px;width:125px;font-weight:bold;">字段名</div><div class="hd" style="left:492px;width:94px;font-weight:bold;">中文显示</div><div class="hd" style="left:588px;width:50px;">序号</div><div class="hd" style="left:640px;width:130px;">序号（手机端）</div><div class="hd" style="left:772px;width:162px;">是否可见（手机端）</div><div class="hd" style="left:936px;width:231px;">显示格式</div><div class="hd" style="left:1169px;width:219px;">编辑格式</div><div class="hd" style="left:1390px;width:136px;color:#1e86e0;">取值范围</div><div class="hd" style="left:1528px;width:584px;">默认值</div><div class="hd" style="left:2114px;width:104px;">OnClick脚本</div><div class="hd" style="left:2220px;width:124px;">OnChange脚本</div><div class="hd" style="left:2346px;width:82px;">是否可见</div><div class="hd" style="left:2430px;width:114px;">允许高级查询</div><div class="hd" style="left:2546px;width:151px;text-align:left;padding-left:9px;">是否</div>
<div class="cell" style="left:221px;top:496px;width:144px;padding-left:4px;">~潜在客户跟进</div><div class="cell" style="left:367px;top:496px;width:125px;padding-left:4px;font-size:18px;">F10</div><div class="cell" style="left:494px;top:496px;width:94px;padding-left:4px;">销售人员</div><div class="cell" style="left:590px;top:496px;width:50px;text-align:right;padding-right:4px;">1</div><div class="cell" style="left:642px;top:496px;width:130px;text-align:right;padding-right:4px;">1</div><div class="cb" style="left:841px;top:496px"><svg style="left:0;top:0" width="20" height="20" viewBox="0 0 20 20"><path d="M4 5.800L8.500 10.200 15.800 2.900 15.900 7.600 8.500 15 4 10.700Z" fill="#000"/></svg></div><div class="cb" style="left:2375px;top:496px"><svg style="left:0;top:0" width="20" height="20" viewBox="0 0 20 20"><path d="M4 5.800L8.500 10.200 15.800 2.900 15.900 7.600 8.500 15 4 10.700Z" fill="#000"/></svg></div><div class="cb" style="left:2475px;top:496px"><svg style="left:0;top:0" width="20" height="20" viewBox="0 0 20 20"><path d="M4 5.800L8.500 10.200 15.800 2.900 15.900 7.600 8.500 15 4 10.700Z" fill="#000"/></svg></div><div class="cell" style="left:1530px;top:496px;width:584px;padding-left:4px;">=&amp;登录用户</div>
<div class="cell" style="left:221px;top:528px;width:144px;padding-left:4px;">~潜在客户跟进</div><div class="cell" style="left:367px;top:528px;width:125px;padding-left:4px;font-size:18px;">F1</div><div class="cell" style="left:494px;top:528px;width:94px;padding-left:4px;">客户性别</div><div class="cell" style="left:590px;top:528px;width:50px;text-align:right;padding-right:4px;">2</div><div class="cell" style="left:642px;top:528px;width:130px;text-align:right;padding-right:4px;">2</div><div class="cb" style="left:841px;top:528px"><svg style="left:0;top:0" width="20" height="20" viewBox="0 0 20 20"><path d="M4 5.800L8.500 10.200 15.800 2.900 15.900 7.600 8.500 15 4 10.700Z" fill="#000"/></svg></div><div class="cb" style="left:2375px;top:528px"><svg style="left:0;top:0" width="20" height="20" viewBox="0 0 20 20"><path d="M4 5.800L8.500 10.200 15.800 2.900 15.900 7.600 8.500 15 4 10.700Z" fill="#000"/></svg></div><div class="cb" style="left:2475px;top:528px"><svg style="left:0;top:0" width="20" height="20" viewBox="0 0 20 20"><path d="M4 5.800L8.500 10.200 15.800 2.900 15.900 7.600 8.500 15 4 10.700Z" fill="#000"/></svg></div><div class="cell" style="left:1530px;top:528px;width:584px;padding-left:4px;">男士<span style="letter-spacing:-.7px"> | </span>女士</div>
<div class="cell" style="left:221px;top:560px;width:144px;padding-left:4px;">~潜在客户跟进</div><div class="cell" style="left:367px;top:560px;width:125px;padding-left:4px;font-size:18px;">F3</div><div class="cell" style="left:494px;top:560px;width:94px;padding-left:4px;">大概年龄</div><div class="cell" style="left:590px;top:560px;width:50px;text-align:right;padding-right:4px;">3</div><div class="cell" style="left:642px;top:560px;width:130px;text-align:right;padding-right:4px;">3</div><div class="cb" style="left:841px;top:560px"><svg style="left:0;top:0" width="20" height="20" viewBox="0 0 20 20"><path d="M4 5.800L8.500 10.200 15.800 2.900 15.900 7.600 8.500 15 4 10.700Z" fill="#000"/></svg></div><div class="cb" style="left:2375px;top:560px"><svg style="left:0;top:0" width="20" height="20" viewBox="0 0 20 20"><path d="M4 5.800L8.500 10.200 15.800 2.900 15.900 7.600 8.500 15 4 10.700Z" fill="#000"/></svg></div><div class="cb" style="left:2475px;top:560px"><svg style="left:0;top:0" width="20" height="20" viewBox="0 0 20 20"><path d="M4 5.800L8.500 10.200 15.800 2.900 15.900 7.600 8.500 15 4 10.700Z" fill="#000"/></svg></div><div class="cell" style="left:1530px;top:560px;width:584px;padding-left:4px;"><span style="letter-spacing:-.4px">20</span>以下<span style="letter-spacing:-.7px"> | </span><span style="letter-spacing:-.4px">21-30</span><span style="letter-spacing:-.7px"> | </span><span style="letter-spacing:-.4px">31-40</span><span style="letter-spacing:-.7px"> | </span><span style="letter-spacing:-.4px">41-50</span><span style="letter-spacing:-.7px"> | </span><span style="letter-spacing:-.4px">51-60</span><span style="letter-spacing:-.7px"> | </span><span style="letter-spacing:-.4px">61</span>以上</div>
<div class="cell" style="left:221px;top:592px;width:144px;padding-left:4px;">~潜在客户跟进</div><div class="cell" style="left:367px;top:592px;width:125px;padding-left:4px;font-size:18px;">F2</div><div class="cell" style="left:494px;top:592px;width:94px;padding-left:4px;">客户姓名</div><div class="cell" style="left:590px;top:592px;width:50px;text-align:right;padding-right:4px;">4</div><div class="cell" style="left:642px;top:592px;width:130px;text-align:right;padding-right:4px;">4</div><div class="cb" style="left:841px;top:592px"><svg style="left:0;top:0" width="20" height="20" viewBox="0 0 20 20"><path d="M4 5.800L8.500 10.200 15.800 2.900 15.900 7.600 8.500 15 4 10.700Z" fill="#000"/></svg></div><div class="cb" style="left:2375px;top:592px"><svg style="left:0;top:0" width="20" height="20" viewBox="0 0 20 20"><path d="M4 5.800L8.500 10.200 15.800 2.900 15.900 7.600 8.500 15 4 10.700Z" fill="#000"/></svg></div><div class="cb" style="left:2475px;top:592px"><svg style="left:0;top:0" width="20" height="20" viewBox="0 0 20 20"><path d="M4 5.800L8.500 10.200 15.800 2.900 15.900 7.600 8.500 15 4 10.700Z" fill="#000"/></svg></div>
<div class="cell" style="left:221px;top:624px;width:144px;padding-left:4px;">~潜在客户跟进</div><div class="cell" style="left:367px;top:624px;width:125px;padding-left:4px;font-size:18px;">F4</div><div class="cell" style="left:494px;top:624px;width:94px;padding-left:4px;">联系电话</div><div class="cell" style="left:590px;top:624px;width:50px;text-align:right;padding-right:4px;">5</div><div class="cell" style="left:642px;top:624px;width:130px;text-align:right;padding-right:4px;">5</div><div class="cb" style="left:841px;top:624px"><svg style="left:0;top:0" width="20" height="20" viewBox="0 0 20 20"><path d="M4 5.800L8.500 10.200 15.800 2.900 15.900 7.600 8.500 15 4 10.700Z" fill="#000"/></svg></div><div class="cb" style="left:2375px;top:624px"><svg style="left:0;top:0" width="20" height="20" viewBox="0 0 20 20"><path d="M4 5.800L8.500 10.200 15.800 2.900 15.900 7.600 8.500 15 4 10.700Z" fill="#000"/></svg></div><div class="cb" style="left:2475px;top:624px"><svg style="left:0;top:0" width="20" height="20" viewBox="0 0 20 20"><path d="M4 5.800L8.500 10.200 15.800 2.900 15.900 7.600 8.500 15 4 10.700Z" fill="#000"/></svg></div>
<div class="cell" style="left:221px;top:656px;width:144px;padding-left:4px;">~潜在客户跟进</div><div class="cell" style="left:367px;top:656px;width:125px;padding-left:4px;font-size:18px;">F5</div><div class="cell" style="left:494px;top:656px;width:94px;padding-left:4px;">购车特性</div><div class="cell" style="left:590px;top:656px;width:50px;text-align:right;padding-right:4px;">6</div><div class="cell" style="left:642px;top:656px;width:130px;text-align:right;padding-right:4px;">6</div><div class="cb" style="left:841px;top:656px"><svg style="left:0;top:0" width="20" height="20" viewBox="0 0 20 20"><path d="M4 5.800L8.500 10.200 15.800 2.900 15.900 7.600 8.500 15 4 10.700Z" fill="#000"/></svg></div><div class="cb" style="left:2375px;top:656px"><svg style="left:0;top:0" width="20" height="20" viewBox="0 0 20 20"><path d="M4 5.800L8.500 10.200 15.800 2.900 15.900 7.600 8.500 15 4 10.700Z" fill="#000"/></svg></div><div class="cb" style="left:2475px;top:656px"><svg style="left:0;top:0" width="20" height="20" viewBox="0 0 20 20"><path d="M4 5.800L8.500 10.200 15.800 2.900 15.900 7.600 8.500 15 4 10.700Z" fill="#000"/></svg></div><div class="cell" style="left:1530px;top:656px;width:584px;padding-left:4px;">首车<span style="letter-spacing:-.7px"> | </span>换车<span style="letter-spacing:-.7px"> | </span>其它</div>
<div class="cell" style="left:221px;top:688px;width:144px;padding-left:4px;">~潜在客户跟进</div><div class="cell" style="left:367px;top:688px;width:125px;padding-left:4px;font-size:18px;">F8</div><div class="cell" style="left:494px;top:688px;width:94px;padding-left:4px;">沟通进度</div><div class="cell" style="left:590px;top:688px;width:50px;text-align:right;padding-right:4px;">7</div><div class="cell" style="left:642px;top:688px;width:130px;text-align:right;padding-right:4px;">7</div><div class="cb" style="left:841px;top:688px"><svg style="left:0;top:0" width="20" height="20" viewBox="0 0 20 20"><path d="M4 5.800L8.500 10.200 15.800 2.900 15.900 7.600 8.500 15 4 10.700Z" fill="#000"/></svg></div><div class="cb" style="left:2375px;top:688px"><svg style="left:0;top:0" width="20" height="20" viewBox="0 0 20 20"><path d="M4 5.800L8.500 10.200 15.800 2.900 15.900 7.600 8.500 15 4 10.700Z" fill="#000"/></svg></div><div class="cb" style="left:2475px;top:688px"><svg style="left:0;top:0" width="20" height="20" viewBox="0 0 20 20"><path d="M4 5.800L8.500 10.200 15.800 2.900 15.900 7.600 8.500 15 4 10.700Z" fill="#000"/></svg></div><div class="cell" style="left:1530px;top:688px;width:584px;padding-left:4px;">初步咨询<span style="letter-spacing:-.7px"> | </span>已有意向<span style="letter-spacing:-.7px"> | </span>意向很大<span style="letter-spacing:-.7px"> | </span>大定<span style="letter-spacing:-.7px"> | </span>已购</div>
<div class="cell" style="left:221px;top:720px;width:144px;padding-left:4px;">~潜在客户跟进</div><div class="cell" style="left:367px;top:720px;width:125px;padding-left:4px;font-size:18px;">F6</div><div class="cell" style="left:494px;top:720px;width:94px;padding-left:4px;">咨询车型</div><div class="cell" style="left:590px;top:720px;width:50px;text-align:right;padding-right:4px;">8</div><div class="cell" style="left:642px;top:720px;width:130px;text-align:right;padding-right:4px;">8</div><div class="cb" style="left:841px;top:720px"><svg style="left:0;top:0" width="20" height="20" viewBox="0 0 20 20"><path d="M4 5.800L8.500 10.200 15.800 2.900 15.900 7.600 8.500 15 4 10.700Z" fill="#000"/></svg></div><div class="cb" style="left:2375px;top:720px"><svg style="left:0;top:0" width="20" height="20" viewBox="0 0 20 20"><path d="M4 5.800L8.500 10.200 15.800 2.900 15.900 7.600 8.500 15 4 10.700Z" fill="#000"/></svg></div><div class="cb" style="left:2475px;top:720px"><svg style="left:0;top:0" width="20" height="20" viewBox="0 0 20 20"><path d="M4 5.800L8.500 10.200 15.800 2.900 15.900 7.600 8.500 15 4 10.700Z" fill="#000"/></svg></div><div class="cell" style="left:1530px;top:720px;width:584px;padding-left:4px;">问界 <span style="letter-spacing:-.4px">M7</span> 性能版<span style="letter-spacing:-.7px"> | </span>问界 <span style="letter-spacing:-.4px">M7</span> 舒适版<span style="letter-spacing:-.7px"> | </span>问界 <span style="letter-spacing:-.4px">M7</span> 豪华版<span style="letter-spacing:-.7px"> | </span>问界 <span style="letter-spacing:-.4px">M7</span> 旗舰版</div>
<div class="cell" style="left:221px;top:752px;width:144px;padding-left:4px;">~潜在客户跟进</div><div class="cell" style="left:367px;top:752px;width:125px;padding-left:4px;font-size:18px;">F9</div><div class="cell" style="left:494px;top:752px;width:94px;padding-left:4px;">市场报价</div><div class="cell" style="left:590px;top:752px;width:50px;text-align:right;padding-right:4px;">9</div><div class="cell" style="left:642px;top:752px;width:130px;text-align:right;padding-right:4px;">9</div><div class="cb" style="left:841px;top:752px"><svg style="left:0;top:0" width="20" height="20" viewBox="0 0 20 20"><path d="M4 5.800L8.500 10.200 15.800 2.900 15.900 7.600 8.500 15 4 10.700Z" fill="#000"/></svg></div><div class="cb" style="left:2375px;top:752px"><svg style="left:0;top:0" width="20" height="20" viewBox="0 0 20 20"><path d="M4 5.800L8.500 10.200 15.800 2.900 15.900 7.600 8.500 15 4 10.700Z" fill="#000"/></svg></div><div class="cb" style="left:2475px;top:752px"><svg style="left:0;top:0" width="20" height="20" viewBox="0 0 20 20"><path d="M4 5.800L8.500 10.200 15.800 2.900 15.900 7.600 8.500 15 4 10.700Z" fill="#000"/></svg></div><div class="cell" style="left:938px;top:752px;width:231px;padding-left:4px;">###,###,###,##0.######</div><div class="cell" style="left:1171px;top:752px;width:219px;padding-left:4px;">###########0.######</div>
<div class="cell" style="left:221px;top:784px;width:144px;padding-left:4px;">~潜在客户跟进</div><div class="cell" style="left:367px;top:784px;width:125px;padding-left:4px;font-size:18px;">F7</div><div class="cell" style="left:494px;top:784px;width:94px;padding-left:4px;">意向价位</div><div class="cell" style="left:590px;top:784px;width:50px;text-align:right;padding-right:4px;">10</div><div class="cell" style="left:642px;top:784px;width:130px;text-align:right;padding-right:4px;">10</div><div class="cb" style="left:841px;top:784px"><svg style="left:0;top:0" width="20" height="20" viewBox="0 0 20 20"><path d="M4 5.800L8.500 10.200 15.800 2.900 15.900 7.600 8.500 15 4 10.700Z" fill="#000"/></svg></div><div class="cb" style="left:2375px;top:784px"><svg style="left:0;top:0" width="20" height="20" viewBox="0 0 20 20"><path d="M4 5.800L8.500 10.200 15.800 2.900 15.900 7.600 8.500 15 4 10.700Z" fill="#000"/></svg></div><div class="cb" style="left:2475px;top:784px"><svg style="left:0;top:0" width="20" height="20" viewBox="0 0 20 20"><path d="M4 5.800L8.500 10.200 15.800 2.900 15.900 7.600 8.500 15 4 10.700Z" fill="#000"/></svg></div>
<div class="cell" style="left:221px;top:816px;width:144px;padding-left:4px;">~潜在客户跟进</div><div class="cell" style="left:367px;top:816px;width:125px;padding-left:4px;font-size:18px;">State</div><div class="cell" style="left:494px;top:816px;width:94px;padding-left:4px;">状态</div><div class="cell" style="left:590px;top:816px;width:50px;text-align:right;padding-right:4px;">11</div><div class="cell" style="left:642px;top:816px;width:130px;text-align:right;padding-right:4px;">13</div><div class="cb" style="left:841px;top:816px"></div><div class="cb" style="left:2375px;top:816px"><svg style="left:0;top:0" width="20" height="20" viewBox="0 0 20 20"><path d="M4 5.800L8.500 10.200 15.800 2.900 15.900 7.600 8.500 15 4 10.700Z" fill="#000"/></svg></div><div class="cb" style="left:2475px;top:816px"><svg style="left:0;top:0" width="20" height="20" viewBox="0 0 20 20"><path d="M4 5.800L8.500 10.200 15.800 2.900 15.900 7.600 8.500 15 4 10.700Z" fill="#000"/></svg></div><div class="cell" style="left:1392px;top:816px;width:136px;padding-left:3px;">未审核,已完成</div><div class="cell" style="left:1530px;top:816px;width:584px;padding-left:4px;">='未审核'</div>
<div class="cell" style="left:221px;top:848px;width:144px;padding-left:4px;">~潜在客户跟进</div><div class="cell" style="left:367px;top:848px;width:125px;padding-left:4px;font-size:18px;">ApproveUser</div><div class="cell" style="left:494px;top:848px;width:94px;padding-left:4px;">审核人</div><div class="cell" style="left:590px;top:848px;width:50px;text-align:right;padding-right:4px;">12</div><div class="cell" style="left:642px;top:848px;width:130px;text-align:right;padding-right:4px;">14</div><div class="cb" style="left:841px;top:848px"></div><div class="cb" style="left:2375px;top:848px"><svg style="left:0;top:0" width="20" height="20" viewBox="0 0 20 20"><path d="M4 5.800L8.500 10.200 15.800 2.900 15.900 7.600 8.500 15 4 10.700Z" fill="#000"/></svg></div><div class="cb" style="left:2475px;top:848px"><svg style="left:0;top:0" width="20" height="20" viewBox="0 0 20 20"><path d="M4 5.800L8.500 10.200 15.800 2.900 15.900 7.600 8.500 15 4 10.700Z" fill="#000"/></svg></div>
<div class="cell" style="left:221px;top:880px;width:144px;padding-left:4px;">~潜在客户跟进</div><div class="cell" style="left:367px;top:880px;width:125px;padding-left:4px;font-size:18px;">ApproveTime</div><div class="cell" style="left:494px;top:880px;width:94px;padding-left:4px;">审核时间</div><div class="cell" style="left:590px;top:880px;width:50px;text-align:right;padding-right:4px;">13</div><div class="cell" style="left:642px;top:880px;width:130px;text-align:right;padding-right:4px;">15</div><div class="cb" style="left:841px;top:880px"></div><div class="cb" style="left:2375px;top:880px"><svg style="left:0;top:0" width="20" height="20" viewBox="0 0 20 20"><path d="M4 5.800L8.500 10.200 15.800 2.900 15.900 7.600 8.500 15 4 10.700Z" fill="#000"/></svg></div><div class="cb" style="left:2475px;top:880px"><svg style="left:0;top:0" width="20" height="20" viewBox="0 0 20 20"><path d="M4 5.800L8.500 10.200 15.800 2.900 15.900 7.600 8.500 15 4 10.700Z" fill="#000"/></svg></div><div class="cell" style="left:938px;top:880px;width:231px;padding-left:4px;font-size:18px;">yyyy-mm-dd hh:nn:ss</div><div class="cell" style="left:1171px;top:880px;width:219px;padding-left:4px;font-size:18px;">yyyy-mm-dd hh:nn:ss</div>
<div class="cell" style="left:221px;top:912px;width:144px;padding-left:4px;">~潜在客户跟进</div><div class="cell" style="left:367px;top:912px;width:125px;padding-left:4px;font-size:18px;">ModifyUser</div><div class="cell" style="left:494px;top:912px;width:94px;padding-left:4px;">修改人</div><div class="cell" style="left:590px;top:912px;width:50px;text-align:right;padding-right:4px;">14</div><div class="cell" style="left:642px;top:912px;width:130px;text-align:right;padding-right:4px;">16</div><div class="cb" style="left:841px;top:912px"></div><div class="cb" style="left:2375px;top:912px"><svg style="left:0;top:0" width="20" height="20" viewBox="0 0 20 20"><path d="M4 5.800L8.500 10.200 15.800 2.900 15.900 7.600 8.500 15 4 10.700Z" fill="#000"/></svg></div><div class="cb" style="left:2475px;top:912px"><svg style="left:0;top:0" width="20" height="20" viewBox="0 0 20 20"><path d="M4 5.800L8.500 10.200 15.800 2.900 15.900 7.600 8.500 15 4 10.700Z" fill="#000"/></svg></div>
<div class="cell" style="left:221px;top:944px;width:144px;padding-left:4px;">~潜在客户跟进</div><div class="cell" style="left:367px;top:944px;width:125px;padding-left:4px;font-size:18px;">ModifyTime</div><div class="cell" style="left:494px;top:944px;width:94px;padding-left:4px;">修改时间</div><div class="cell" style="left:590px;top:944px;width:50px;text-align:right;padding-right:4px;">15</div><div class="cell" style="left:642px;top:944px;width:130px;text-align:right;padding-right:4px;">17</div><div class="cb" style="left:841px;top:944px"></div><div class="cb" style="left:2375px;top:944px"><svg style="left:0;top:0" width="20" height="20" viewBox="0 0 20 20"><path d="M4 5.800L8.500 10.200 15.800 2.900 15.900 7.600 8.500 15 4 10.700Z" fill="#000"/></svg></div><div class="cb" style="left:2475px;top:944px"><svg style="left:0;top:0" width="20" height="20" viewBox="0 0 20 20"><path d="M4 5.800L8.500 10.200 15.800 2.900 15.900 7.600 8.500 15 4 10.700Z" fill="#000"/></svg></div><div class="cell" style="left:938px;top:944px;width:231px;padding-left:4px;font-size:18px;">yyyy-mm-dd hh:nn:ss</div><div class="cell" style="left:1171px;top:944px;width:219px;padding-left:4px;font-size:18px;">yyyy-mm-dd hh:nn:ss</div>
<div class="cell" style="left:221px;top:976px;width:144px;padding-left:4px;">~潜在客户跟进</div><div class="cell" style="left:367px;top:976px;width:125px;padding-left:4px;font-size:18px;">Id</div><div class="cell" style="left:494px;top:976px;width:94px;padding-left:4px;font-size:18px;">Id</div><div class="cell" style="left:590px;top:976px;width:50px;text-align:right;padding-right:4px;">16</div><div class="cell" style="left:642px;top:976px;width:130px;text-align:right;padding-right:4px;">11</div><div class="cb" style="left:841px;top:976px"></div><div class="cb" style="left:2375px;top:976px"></div><div class="cb" style="left:2475px;top:976px"></div><div class="cell" style="left:1530px;top:976px;width:584px;padding-left:4px;">=&amp;唯一标识</div>
<div class="cell" style="left:221px;top:1008px;width:144px;padding-left:4px;">~潜在客户跟进</div><div class="cell" style="left:367px;top:1008px;width:125px;padding-left:4px;font-size:18px;">NodeId</div><div class="cell" style="left:494px;top:1008px;width:94px;padding-left:4px;font-size:18px;">NodeId</div><div class="cell" style="left:590px;top:1008px;width:50px;text-align:right;padding-right:4px;">17</div><div class="cell" style="left:642px;top:1008px;width:130px;text-align:right;padding-right:4px;">12</div><div class="cb" style="left:841px;top:1008px"></div><div class="cb" style="left:2375px;top:1008px"></div><div class="cb" style="left:2475px;top:1008px"></div><div class="cell" style="left:1530px;top:1008px;width:584px;padding-left:4px;">=&amp;门店标识</div>
<svg style="left:206px;top:726px" width="10" height="17" viewBox="0 0 10 17"><path d="M0 0L9.500 8.500 0 17Z" fill="#000"/></svg><div class="a" style="left:643px;top:720px;width:128px;height:29px;border:1px dotted #222"></div>
<div class="a" style="left:0;top:1528px;width:2559px;height:5px;background:#2e2e2e"></div>
</body></html>
